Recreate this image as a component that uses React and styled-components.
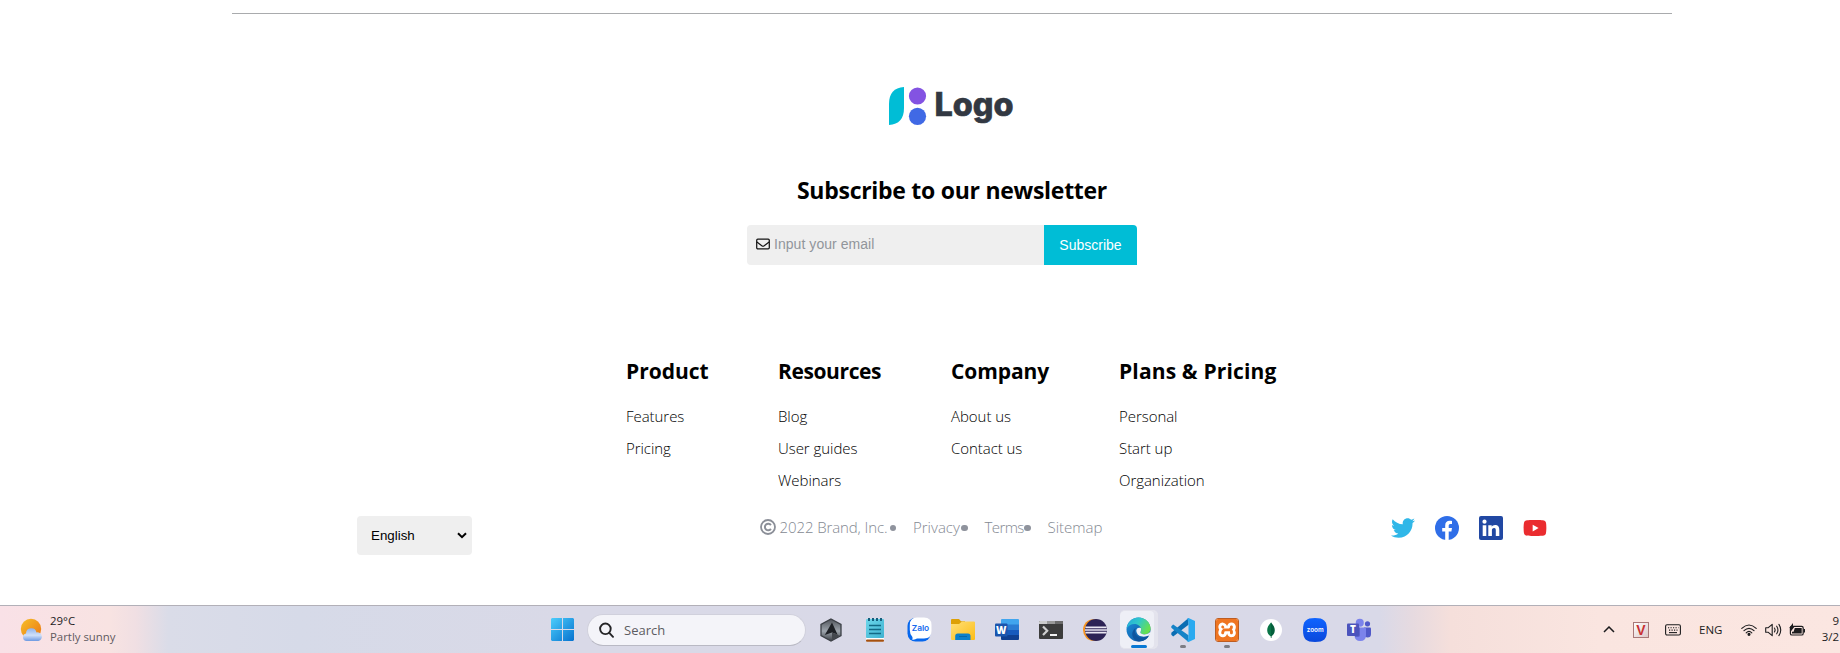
import React from 'react';
import styled, { createGlobalStyle } from 'styled-components';
import { FaTwitter, FaYoutube } from 'react-icons/fa';
import { SiXampp } from 'react-icons/si';

const GlobalStyle = createGlobalStyle`
  * { box-sizing: border-box; }
  body { margin: 0; background: #fff; color: #000; font-family: "Open Sans", "Noto Sans", sans-serif; overflow: hidden; }
  h2, h3, ul { margin: 0; padding: 0; }
  ul { list-style: none; }
  svg { display: block; flex: none; }
`;

const Screen = styled.div`
  display: flex;
  flex-direction: column;
  height: 653px;
  overflow: hidden;
`;

const Footer = styled.footer`
  flex: 1;
  display: flex;
  flex-direction: column;
  align-items: center;
  width: 1440px;
  margin: 13px 0 0 232px;
  border-top: 1px solid #a9abad;
`;

const LogoWrap = styled.div`
  margin-top: 66px;
  height: 56px;
`;

const Title = styled.h2`
  margin-top: 38px;
  font-size: 23px;
  line-height: 32px;
  font-weight: 700;
  letter-spacing: -0.28px;
`;

const Form = styled.form`
  display: flex;
  width: 390px;
  height: 40px;
  margin: 19px 20px 0 0;
  border-radius: 4px 4px 0 4px;
  overflow: hidden;
  font: 14px "Liberation Sans", Arial, sans-serif;
`;

const Field = styled.label`
  flex: 1;
  display: flex;
  align-items: center;
  gap: 4px;
  padding: 0 9px 2px;
  background: #efefef;
`;

const EmailInput = styled.input`
  flex: 1;
  border: 0;
  padding: 0;
  outline: 0;
  background: transparent;
  font: inherit;
  letter-spacing: 0.05px;
  &::placeholder { color: #91959b; opacity: 1; }
`;

const SubmitButton = styled.button`
  width: 93px;
  border: 0;
  padding: 0;
  background: #00bdd6;
  color: #fff;
  font: inherit;
`;

const Columns = styled.nav`
  display: grid;
  grid-template-columns: 152px 173px 168px 159px;
  height: 140px;
  margin-top: 91px;
`;

const ColumnTitle = styled.h3`
  font-size: 21px;
  line-height: 30px;
  font-weight: 700;
  white-space: nowrap;
  letter-spacing: ${(p) => p.$spacing || 0}px;
  margin-bottom: 14px;
`;

const LinkItem = styled.li`
  font-size: 15px;
  line-height: 32px;
  font-weight: 300;
  letter-spacing: -0.05px;
`;

const BottomRow = styled.div`
  align-self: stretch;
  display: flex;
  justify-content: space-between;
  align-items: flex-start;
  padding: 0 125px;
  margin-top: 19px;
`;

const Language = styled.div`
  display: flex;
  align-items: center;
  justify-content: space-between;
  width: 115px;
  height: 39px;
  margin-top: 1px;
  padding: 0 5px 0 14px;
  border-radius: 4px;
  background: #efefef;
  font: 13.33px "Liberation Sans", Arial, sans-serif;
`;

const Legal = styled.div`
  display: flex;
  align-items: center;
  height: 24px;
  padding-right: 2px;
  font-size: 15px;
  line-height: 24px;
  font-weight: 300;
  color: #848992;
`;

const LegalText = styled.span`
  width: ${(p) => p.$w}px;
  margin-left: ${(p) => p.$gap}px;
  white-space: nowrap;
  letter-spacing: ${(p) => p.$spacing || 0}px;
`;

const Bullet = styled.i`
  width: 6.5px;
  height: 6.5px;
  margin-top: 2px;
  border-radius: 50%;
  background: #8f939d;
`;

const Social = styled.div`
  display: flex;
  align-items: center;
  gap: 20px;
  height: 24px;
  margin-top: 1px;
`;

const Taskbar = styled.div`
  display: flex;
  align-items: center;
  flex: none;
  height: 48px;
  border-top: 1px solid #b2b0b8;
  background: linear-gradient(90deg, #f9e1e7 0, #f8e3e2 110px, #f0dfe3 136px, #dadce8 168px, #d6dae8 300px, #d9d9e7 560px, #d9d9e8 1380px, #e6dae0 1412px, #f5dfdb 1450px, #fae5e0 1600px, #fbe6e1 1840px);
  color: #1c1c1e;
  font-size: 11.5px;
`;

const Weather = styled.div`
  display: flex;
  width: 550px;
  padding-left: 20px;
  gap: 6px;
  align-items: center;
`;

const WeatherText = styled.div`
  font-size: 11.4px;
  line-height: 16px;
  padding-bottom: 1px;
  span { display: block; color: #5f5a5f; }
`;

const StartButton = styled.div`
  width: 24px;
  padding-left: 1px;
`;

const SearchPill = styled.div`
  display: flex;
  align-items: center;
  gap: 10px;
  width: 219px;
  height: 32px;
  margin: 0 3px 0 13px;
  padding-left: 11px;
  border: 1px solid #d0d0dc;
  border-bottom-color: #b9b9c4;
  border-radius: 16px;
  background: #f4f4f9;
  color: #5c5c61;
  font-size: 13px;
`;

const AppSlot = styled.div`
  position: relative;
  display: flex;
  align-items: center;
  justify-content: center;
  width: 44px;
  height: 47px;
`;

const ActiveTile = styled.div`
  display: flex;
  align-items: center;
  justify-content: center;
  width: 38px;
  height: 39px;
  border: 1px solid #e3e3ec;
  border-left: 0;
  border-radius: 5px;
  background: #eeeff6;
  box-shadow: inset -3px 0 0 #e3e3ed;
`;

const RunMark = styled.span`
  position: absolute;
  bottom: 5px;
  width: ${(p) => (p.$active ? 16 : 6)}px;
  height: 3px;
  border-radius: 2px;
  background: ${(p) => (p.$active ? '#0878d4' : '#7d7d84')};
`;

const XamppTile = styled.div`
  display: flex;
  align-items: center;
  justify-content: center;
  width: 24px;
  height: 24px;
  border: 1px solid #bd5d22;
  border-radius: 3px;
  background: #fff;
  overflow: hidden;
`;

const Tray = styled.div`
  display: flex;
  align-items: center;
  flex: 1;
  padding-left: 222px;
`;

const TrayItem = styled.div`
  display: flex;
  align-items: center;
  width: ${(p) => p.$w}px;
`;

const Clock = styled.div`
  flex: 1;
  line-height: 16px;
  text-align: right;
  padding: 0 1px 1px 0;
`;

const Logo = () => (
  <svg width="132" height="56" viewBox="0 0 132 56">
    <path d="M3 45V24Q3 8 18 7V28Q18 44 3 45Z" fill="#00bdd6" />
    <circle cx="31.5" cy="16" r="8.6" fill="#8353e2" />
    <circle cx="31.5" cy="36.3" r="8.6" fill="#4069e5" />
    <text x="48.5" y="36.2" fontFamily="Inter, sans-serif" fontWeight="800" fontSize="32" textLength="79" lengthAdjust="spacingAndGlyphs" fill="#323842" stroke="#323842" strokeWidth=".6">Logo</text>
  </svg>
);

const EnvelopeIcon = () => (
  <svg width="14" height="12" viewBox="0 0 14 12" fill="none" stroke="#151515" strokeWidth="1.25">
    <rect x=".7" y="1.2" width="12.6" height="9.6" rx="1.1" />
    <path d="M.9 4L5.8 7.7Q7 8.5 8.2 7.7L13.1 4" />
  </svg>
);

const CopyrightIcon = () => (
  <svg width="16" height="16" viewBox="0 0 16 16" fill="none" stroke="#8b8f98" strokeWidth="1.8">
    <circle cx="8" cy="8" r="7" />
    <path d="M10.9 9.9A3.3 3.3 0 1 1 10.9 6.1" strokeWidth="2" />
  </svg>
);

const FacebookIcon = () => (
  <svg width="24" height="24" viewBox="0 0 24 24">
    <circle cx="12" cy="12" r="12" fill="#2f6ee8" />
    <path d="M10.2 24V15.4H7.2V12H10.2V9.4C10.2 6.4 12 4.8 14.6 4.8 15.8 4.8 17 5 17 5V7.9H15.5C14 7.9 13.7 8.8 13.7 9.7V12H17L16.4 15.4H13.7V24Z" fill="#fff" />
  </svg>
);

const LinkedinIcon = () => (
  <svg width="24" height="24" viewBox="0 0 24 24">
    <rect width="24" height="24" rx="2" fill="#2148a3" />
    <circle cx="5.5" cy="5.7" r="2.1" fill="#fff" />
    <path d="M3.7 9.2H7.3V20H3.7ZM9.3 9.2H12.7V10.7C13.3 9.7 14.5 8.9 16.1 8.9 19.5 8.9 20.3 11.1 20.3 14V20H16.8V14.6C16.8 13.2 16.7 11.9 15.1 11.9 13.4 11.9 12.9 13 12.9 14.5V20H9.3Z" fill="#fff" />
  </svg>
);

const WeatherIcon = () => (
  <svg width="24" height="26" viewBox="0 0 24 26">
    <defs>
      <linearGradient id="sun" x1="0" y1="0" x2="1" y2="1"><stop stopColor="#f6c02a" /><stop offset="1" stopColor="#ec7412" /></linearGradient>
      <linearGradient id="cloud" x1="0" y1="0" x2="0" y2="1"><stop stopColor="#8fb2ea" /><stop offset=".55" stopColor="#d0e0f9" /><stop offset="1" stopColor="#6d99e2" /></linearGradient>
    </defs>
    <circle cx="11" cy="12" r="10.2" fill="url(#sun)" />
    <path d="M6.5 24A3.8 3.8 0 0 1 6 16.5 5.3 5.3 0 0 1 16.5 15.5 4.3 4.3 0 1 1 18.5 24Z" fill="url(#cloud)" />
  </svg>
);

const WindowsIcon = () => (
  <svg width="23" height="23" viewBox="0 0 23 23">
    <defs><linearGradient id="win" gradientUnits="userSpaceOnUse" x1="0" y1="0" x2="23" y2="23"><stop stopColor="#4ccdfb" /><stop offset="1" stopColor="#0672cf" /></linearGradient></defs>
    <path d="M1 0H11V11H0V1ZM12 0H22L23 1V11H12ZM0 12H11V23H1L0 22ZM12 12H23V22L22 23H12Z" fill="url(#win)" />
  </svg>
);

const SearchIcon = () => (
  <svg width="15" height="16" viewBox="0 0 15 16" fill="none" stroke="#242427" strokeWidth="1.9" strokeLinecap="round">
    <circle cx="6.4" cy="6.8" r="5.3" /><path d="M10.3 10.9L14 14.8" />
  </svg>
);

const HexIcon = () => (
  <svg width="24" height="24" viewBox="0 0 24 24">
    <defs><linearGradient id="hex" x1="0" y1="0" x2="0" y2="1"><stop stopColor="#50545b" /><stop offset=".55" stopColor="#9da4ac" /><stop offset="1" stopColor="#3c4046" /></linearGradient></defs>
    <path d="M12 1L22 6.5V17.5L12 23 2 17.5V6.5Z" fill="url(#hex)" stroke="#3b3f45" strokeWidth="1.3" />
    <path d="M13 4.5L18.5 16.5 13 14.5 5.8 17Z" fill="#1e2126" />
    <path d="M13 14.5L18.5 16.5 20.5 18 13 22Z" fill="#44484e" />
  </svg>
);

const NotepadIcon = () => (
  <svg width="20" height="25" viewBox="0 0 20 25">
    <defs><linearGradient id="note" x1="0" y1="0" x2="1" y2="1"><stop stopColor="#6cd6ea" /><stop offset="1" stopColor="#3fb2d0" /></linearGradient></defs>
    <rect x="1" y="20.5" width="18" height="4" rx="1" fill="#fff" />
    <rect x="1" y="22.5" width="18" height="2.2" rx="1" fill="#a5500f" />
    <rect x="1" y="2" width="18" height="19" rx="1" fill="url(#note)" />
    <path d="M4 1V4M8 1V4M12 1V4M16 1V4" stroke="#155f7d" strokeWidth="2" />
    <path d="M4 8.4H16M4 12.4H16M4 16.4H16" stroke="#126985" strokeWidth="1.5" />
  </svg>
);

const ZaloIcon = () => (
  <svg width="25" height="25" viewBox="0 0 25 25">
    <rect x="0.5" y="1" width="23" height="23.5" rx="8" fill="#0667ed" />
    <path d="M10 .5H17Q24.5 .5 24.5 8V14Q24.5 21.5 17 21.5H10Q8 23 5 22.5 6 21.5 5.4 20 2.8 17.5 2.8 13V8Q2.8 .5 10 .5Z" fill="#fff" />
    <text x="4.7" y="14.3" fontFamily="Inter, sans-serif" fontWeight="600" fontSize="8" textLength="17.5" lengthAdjust="spacingAndGlyphs" fill="#1268ee">Zalo</text>
  </svg>
);

const FolderIcon = () => (
  <svg width="24" height="24" viewBox="0 0 24 24">
    <defs><linearGradient id="folder" x1="0" y1="0" x2="1" y2="1"><stop stopColor="#ffdf78" /><stop offset="1" stopColor="#fcbd15" /></linearGradient></defs>
    <path d="M0 2Q0 1 1 1H8L10 3.2H14V8H0Z" fill="#dda006" />
    <path d="M0 6H8L11 3.5H23Q24 3.5 24 4.5V21Q24 22 23 22H1Q0 22 0 21Z" fill="url(#folder)" />
    <path d="M4.2 22V18Q4.2 15.5 6.7 15.5H17Q19.5 15.5 19.5 18V22Z" fill="#0c80cb" />
    <path d="M8 18.5H16" stroke="#0868a8" />
  </svg>
);

const WordIcon = () => (
  <svg width="24" height="24" viewBox="0 0 24 24">
    <path d="M6 2Q6 1 7 1H23Q24 1 24 2V7H6Z" fill="#41a5ee" />
    <path d="M6 6.5H24V12H6Z" fill="#2b7cd3" /><path d="M6 12H24V17H6Z" fill="#185abd" />
    <path d="M6 17H24V21Q24 22 23 22H7Q6 22 6 21Z" fill="#103f91" />
    <rect y="5.5" width="12.5" height="13" rx="1" fill="#1b55ad" />
    <text x="6.2" y="15.6" textAnchor="middle" fontFamily="Open Sans, sans-serif" fontWeight="800" fontSize="10" fill="#fff">W</text>
  </svg>
);

const TerminalIcon = () => (
  <svg width="24" height="24" viewBox="0 0 24 24">
    <rect y="3" width="24" height="18" rx="1" fill="#3c3c3c" />
    <path d="M0 6V4Q0 3 1 3H8V6Z" fill="#ccc" /><path d="M8 3H16V6H8Z" fill="#999" /><path d="M16 3H23Q24 3 24 4V6H16Z" fill="#6b6b6b" />
    <path d="M4 8.5L8.2 12.8 4 17" fill="none" stroke="#d0d0d0" strokeWidth="2.2" /><path d="M11 17H18" stroke="#f2f2f2" strokeWidth="2" />
  </svg>
);

const EclipseIcon = () => (
  <svg width="24" height="24" viewBox="0 0 24 24">
    <ellipse cx="10.5" cy="12" rx="10.5" ry="10.8" fill="#f7941e" />
    <ellipse cx="13" cy="12" rx="11" ry="11" fill="#2c2255" />
    <path d="M2.4 9.4H23.6M2 12H24M2.4 14.6H23.6" stroke="#e9e6f2" strokeWidth="1.6" />
  </svg>
);

const EdgeIcon = () => (
  <svg width="25" height="25" viewBox="0 0 25 25">
    <defs>
      <linearGradient id="edgeTop" x1="0" y1="0" x2="1" y2=".5"><stop stopColor="#23a9dd" /><stop offset=".5" stopColor="#31c8c9" /><stop offset="1" stopColor="#66e050" /></linearGradient>
      <linearGradient id="edgeLow" x1="0" y1="0" x2="1" y2="1"><stop stopColor="#1b92dd" /><stop offset="1" stopColor="#0e4d98" /></linearGradient>
    </defs>
    <circle cx="12.5" cy="12.5" r="12" fill="url(#edgeLow)" />
    <path d="M.6 11.5C1.5 5 6.5.5 12.5.5 19.5.5 24.6 6 24.6 11.5 24.6 15.5 21.5 17.4 18.5 17.4 15.8 17.4 14.3 16.4 14.3 15.6 14.3 15 15.2 14.5 15.2 12.5 15.2 9.5 12 7 8.5 7 5 7 2 9 .6 11.5Z" fill="url(#edgeTop)" />
    <path d="M9.8 11C7.5 14.5 10 20.5 16 20.8 19 21 21.5 20 23 18.8 21 22.5 17 24.6 13 24.5 6.5 23.8 3.5 15 9.8 11Z" fill="#0d559f" />
    <path d="M10.3 13.5C10.5 11.2 12.6 10 15 11.2 15.5 13.5 14.3 14.8 14.3 15.6 14.6 17 17.5 17.8 20 17.3 22 17 23.5 15.6 24.2 14.8 24.6 16 24 17.4 23 18.6 18 20.8 10.7 20 10.3 13.5Z" fill="#eef2f8" />
  </svg>
);

const CodeIcon = () => (
  <svg width="24" height="24" viewBox="0 0 24 24">
    <path d="M.3 14.8L17.5 0V6.8L2.2 18.4.3 16.8Z" fill="#0b6db3" />
    <path d="M.3 8.3L2.2 6.5 17.5 17.3V24L.3 9.8Z" fill="#1583c7" />
    <path d="M17.5 0L24 3V21L17.5 24 16.2 23.2 17.5 20V4L16.2.8Z" fill="#2aaaf0" />
  </svg>
);

const XamppIcon = () => (
  <XamppTile><SiXampp size={24} color="#ef7521" /></XamppTile>
);

const MongoIcon = () => (
  <svg width="22" height="22" viewBox="0 0 22 22">
    <circle cx="11" cy="11" r="11" fill="#fff" />
    <path d="M11 3.5C8.5 6.2 7.2 8.5 7.2 11.3 7.2 14 8.8 16.2 10.8 17.5V19H11.3V3.5Z" fill="#0a7547" />
    <path d="M11 3.5C13.5 6.2 14.8 8.5 14.8 11.3 14.8 14 13.2 16.2 11.3 17.5V19H11Z" fill="#045f3c" />
  </svg>
);

const ZoomIcon = () => (
  <svg width="24" height="24" viewBox="0 0 24 24">
    <defs><linearGradient id="zm" x1="0" y1="0" x2="0" y2="1"><stop stopColor="#0f64ff" /><stop offset="1" stopColor="#0a48db" /></linearGradient></defs>
    <path d="M12 0C21 0 24 3 24 12S21 24 12 24 0 21 0 12 3 0 12 0Z" fill="url(#zm)" />
    <text x="3.8" y="13.8" fontFamily="Inter, sans-serif" fontWeight="600" fontSize="6.6" textLength="16.8" lengthAdjust="spacingAndGlyphs" fill="#fff">zoom</text>
  </svg>
);

const TeamsIcon = () => (
  <svg width="24" height="24" viewBox="0 0 24 24">
    <circle cx="20.5" cy="5.8" r="2.6" fill="#5059c9" /><circle cx="12.8" cy="4.8" r="4" fill="#7b83eb" />
    <path d="M17 9.5H23Q24 9.5 24 10.5V16Q24 19.5 20.5 19.5 18 19.5 17 17Z" fill="#5059c9" />
    <path d="M7.5 9.5H18Q19 9.5 19 10.5V17Q19 23 13.3 23T7.5 17Z" fill="#7b83eb" />
    <path d="M7.5 9.5H13V17Q13 19 11 19H8Z" fill="#5c63cc" />
    <rect y="5.5" width="12" height="12.5" rx="1" fill="#4b53bc" />
    <text x="6" y="15.4" textAnchor="middle" fontFamily="Open Sans, sans-serif" fontWeight="800" fontSize="10" fill="#fff">T</text>
  </svg>
);

const VietKeyIcon = () => (
  <svg width="16" height="16" viewBox="0 0 16 16">
    <defs><linearGradient id="vk" x1="0" y1="0" x2="1" y2="1"><stop stopColor="#fff" /><stop offset="1" stopColor="#dcc6c6" /></linearGradient></defs>
    <rect x=".5" y=".5" width="15" height="15" fill="url(#vk)" stroke="#a87878" />
    <text x="8" y="13" textAnchor="middle" fontFamily="Liberation Sans, sans-serif" fontWeight="700" fontSize="14" fill="#c93234">V</text>
  </svg>
);

const KeyboardIcon = () => (
  <svg width="16" height="12" viewBox="0 0 16 12" fill="none" stroke="#1c1c1e" strokeWidth="1.1">
    <rect x=".6" y=".8" width="14.8" height="10.2" rx="1.4" />
    <path d="M3 3.8H13.5M4 6.1H12.5" strokeDasharray="1.2 1.3" /><path d="M4 8.6H12" />
  </svg>
);

const WifiIcon = () => (
  <svg width="16" height="12" viewBox="0 0 16 12" fill="none" stroke="#1c1c1e" strokeWidth="1.15" strokeLinecap="round">
    <path d="M.8 4.4Q8-2.4 15.2 4.4M3 6.7Q8 2 13 6.7M5.2 8.8Q8 6 10.8 8.8" /><circle cx="8" cy="10.3" r="1" fill="#1c1c1e" />
  </svg>
);

const VolumeIcon = () => (
  <svg width="17" height="14" viewBox="0 0 17 14" fill="none" stroke="#1c1c1e" strokeWidth="1.1" strokeLinecap="round" strokeLinejoin="round">
    <path d="M.7 4.7H3.3L7.2 1.3V12.7L3.3 9.3H.7ZM9.4 5Q10.8 7 9.4 9M11.7 3.2Q14.2 7 11.7 10.8M13.9 1.4Q17.6 7 13.9 12.6" />
  </svg>
);

const BatteryIcon = () => (
  <svg width="17" height="14" viewBox="0 0 17 14">
    <rect x="1.4" y="3.4" width="12.8" height="8.6" rx="1.6" fill="none" stroke="#1c1c1e" strokeWidth="1.2" />
    <path d="M5.8 5H12.7V10.5H3V8.8H4.6ZM14.5 6H16V9.5H14.5ZM4 0V3H6L2 8.2V5H.2Z" fill="#1c1c1e" />
  </svg>
);

const columns = [
  { title: 'Product', links: ['Features', 'Pricing'] },
  { title: 'Resources', links: ['Blog', 'User guides', 'Webinars'], spacing: -0.4 },
  { title: 'Company', links: ['About us', 'Contact us'], spacing: -0.1 },
  { title: 'Plans & Pricing', links: ['Personal', 'Start up', 'Organization'], spacing: 0.15 },
];

const apps = [
  { Icon: HexIcon }, { Icon: NotepadIcon }, { Icon: ZaloIcon }, { Icon: FolderIcon }, { Icon: WordIcon },
  { Icon: TerminalIcon }, { Icon: EclipseIcon }, { Icon: EdgeIcon, active: true }, { Icon: CodeIcon, running: true },
  { Icon: XamppIcon, running: true }, { Icon: MongoIcon }, { Icon: ZoomIcon }, { Icon: TeamsIcon },
];

export default function App() {
  return (
    <Screen>
      <GlobalStyle />
      <Footer>
        <LogoWrap><Logo /></LogoWrap>
        <Title>Subscribe to our newsletter</Title>
        <Form>
          <Field>
            <EnvelopeIcon />
            <EmailInput placeholder="Input your email" />
          </Field>
          <SubmitButton type="button">Subscribe</SubmitButton>
        </Form>
        <Columns>
          {columns.map((c) => (
            <div key={c.title}>
              <ColumnTitle $spacing={c.spacing}>{c.title}</ColumnTitle>
              <ul>{c.links.map((l) => <LinkItem key={l}>{l}</LinkItem>)}</ul>
            </div>
          ))}
        </Columns>
        <BottomRow>
          <Language>
            English
            <svg width="10" height="7" viewBox="0 0 10 7" fill="none" stroke="#000" strokeWidth="2"><path d="M1 1.2L5 5.2 9 1.2" /></svg>
          </Language>
          <Legal>
            <CopyrightIcon />
            <LegalText $w={110} $gap={4} $spacing={-0.1}>2022 Brand, Inc.</LegalText>
            <Bullet />
            <LegalText $w={48} $gap={17}>Privacy</LegalText>
            <Bullet />
            <LegalText $w={39.5} $gap={17} $spacing={-0.6}>Terms</LegalText>
            <Bullet />
            <LegalText $w={54} $gap={17}>Sitemap</LegalText>
          </Legal>
          <Social>
            <FaTwitter size={24} color="#30b7e8" />
            <FacebookIcon />
            <LinkedinIcon />
            <FaYoutube size={24} color="#ea2c2f" />
          </Social>
        </BottomRow>
      </Footer>
      <Taskbar>
        <Weather>
          <WeatherIcon />
          <WeatherText>29°C<span>Partly sunny</span></WeatherText>
        </Weather>
        <StartButton><WindowsIcon /></StartButton>
        <SearchPill><SearchIcon />Search</SearchPill>
        {apps.map(({ Icon, active, running }, i) => (
          <AppSlot key={i}>
            {active ? <ActiveTile><Icon /></ActiveTile> : <Icon />}
            {(active || running) && <RunMark $active={active} />}
          </AppSlot>
        ))}
        <Tray>
          <TrayItem $w={30}>
            <svg width="12" height="7" viewBox="0 0 12 7" fill="none" stroke="#1c1c1e" strokeWidth="1.5"><path d="M1 6L6 1 11 6" /></svg>
          </TrayItem>
          <TrayItem $w={32}><VietKeyIcon /></TrayItem>
          <TrayItem $w={34}><KeyboardIcon /></TrayItem>
          <TrayItem $w={42}>ENG</TrayItem>
          <TrayItem $w={24}><WifiIcon /></TrayItem>
          <TrayItem $w={24}><VolumeIcon /></TrayItem>
          <TrayItem $w={17}><BatteryIcon /></TrayItem>
          <Clock>9<br />3/2</Clock>
        </Tray>
      </Taskbar>
    </Screen>
  );
}
